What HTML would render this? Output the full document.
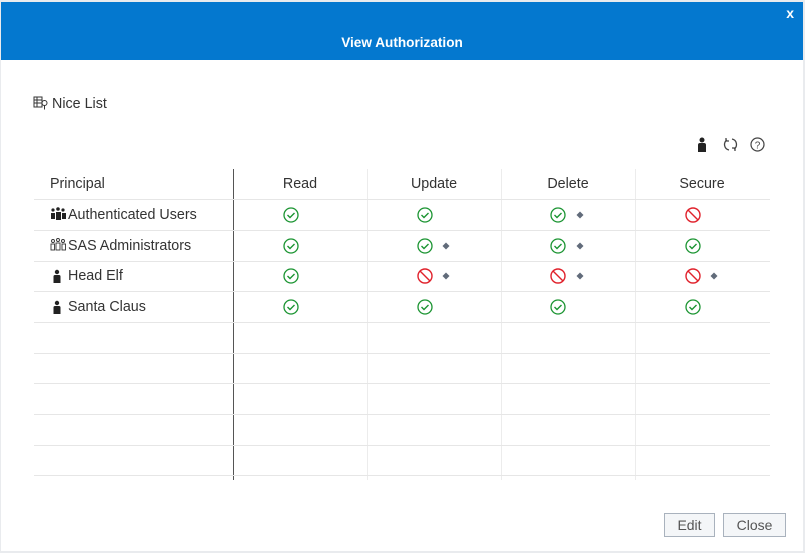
<!DOCTYPE html>
<html><head><style>
body{margin:0;width:805px;height:553px;background:#e9ebee;font-family:"Liberation Sans",sans-serif;position:relative;overflow:hidden}
.dlg{position:absolute;left:1px;top:2px;width:802px;height:549px;background:#fff}
.hdr{position:absolute;left:0;top:0;width:802px;height:58px;background:#0478cf;color:#fff}
.hdr .t{position:absolute;top:33px;width:100%;text-align:center;font-weight:bold;font-size:13.6px}
.hdr .x{position:absolute;right:9px;top:3px;font-weight:bold;font-size:14px}
.abs{position:absolute}
.txt{font-size:14.3px;color:#333}
.hl{position:absolute;left:34px;width:736px;height:1px;background:#e6e6e6}
.vl{position:absolute;top:169px;height:311px;width:1px;background:#ececec}
.th{position:absolute;top:176px;font-size:14.3px;color:#333;text-align:center;width:134px}
.btn{position:absolute;top:513px;height:22px;border:1px solid #a9b2bd;background:#f4f6f8;color:#555;font-size:14px;text-align:center;line-height:22px}
</style></head><body>
<div class="dlg">
<div class="hdr"><div class="t">View Authorization</div><div class="x">x</div></div>
</div>
<svg class="abs" style="left:33px;top:96px" width="16" height="14" viewBox="0 0 16 14"><rect x="1" y="1" width="8" height="10" fill="none" stroke="#333"/><path d="M1 4h8M1 7h8M4 1v10" stroke="#333"/><circle cx="11.5" cy="7" r="2.5" fill="#fff" stroke="#333"/><path d="M11.5 9.5v4" stroke="#333"/></svg>
<div class="abs txt" style="left:52px;top:96px">Nice List</div>
<svg class="abs" style="left:697px;top:137px" width="10" height="16" viewBox="0 0 10 16"><circle cx="5" cy="3" r="2.5" fill="#222"/><path d="M1 15V8q0-2 2-2h4q2 0 2 2v7z" fill="#222"/></svg>
<svg class="abs" style="left:723px;top:137px" width="15" height="15" viewBox="0 0 15 15" fill="none" stroke="#444" stroke-width="1.3"><path d="M4 3A5.5 5.5 0 0 0 6 13M11 12A5.5 5.5 0 0 0 9 2"/><path d="M3 1v3h3M12 14v-3h-3"/></svg>
<svg class="abs" style="left:750px;top:137px" width="15" height="15" viewBox="0 0 15 15"><circle cx="7.5" cy="7.5" r="6.5" fill="none" stroke="#444" stroke-width="1.2"/><text x="7.5" y="11.5" font-size="10" text-anchor="middle" fill="#444" font-family="Liberation Sans">?</text></svg>
<div class="abs" style="left:50px;top:176px;font-size:14.3px;color:#333">Principal</div>
<div class="th" style="left:233px">Read</div>
<div class="th" style="left:367px">Update</div>
<div class="th" style="left:501px">Delete</div>
<div class="th" style="left:635px">Secure</div>
<div class="abs" style="left:233px;top:169px;width:1px;height:311px;background:#555"></div>
<div class="vl" style="left:367px"></div><div class="vl" style="left:501px"></div><div class="vl" style="left:635px"></div>
<div class="hl" style="top:199px"></div><div class="hl" style="top:230px"></div><div class="hl" style="top:261px"></div><div class="hl" style="top:291px"></div><div class="hl" style="top:322px"></div><div class="hl" style="top:353px"></div><div class="hl" style="top:383px"></div><div class="hl" style="top:414px"></div><div class="hl" style="top:445px"></div><div class="hl" style="top:475px"></div>
<svg width="805" height="553" class="abs" style="left:0;top:0">
<defs>
<g id="ok"><circle r="7" fill="none" stroke="#1a9431" stroke-width="1.3"/><path d="M-3.5 0l2.5 2.5 4.5-4.5" fill="none" stroke="#1a9431" stroke-width="1.4"/></g>
<g id="no"><circle r="7" fill="none" stroke="#e0212b" stroke-width="1.4"/><path d="M-5 -5L5 5" stroke="#e0212b" stroke-width="1.4"/></g>
<path id="d" d="M0 -3.5L3.5 0 0 3.5 -3.5 0z" fill="#616b7a"/>
<g id="p"><circle cx="0" cy="-5" r="2.2" fill="#222"/><path d="M-3.5 6V-0.5q0-1.5 1.5-1.5h4q1.5 0 1.5 1.5V6z" fill="#222"/></g>
</defs>
<use href="#ok" x="291" y="215"/><use href="#ok" x="425" y="215"/><use href="#ok" x="558" y="215"/><use href="#d" x="580" y="215"/><use href="#no" x="693" y="215"/>
<use href="#ok" x="291" y="246"/><use href="#ok" x="425" y="246"/><use href="#d" x="446" y="246"/><use href="#ok" x="558" y="246"/><use href="#d" x="580" y="246"/><use href="#ok" x="693" y="246"/>
<use href="#ok" x="291" y="276"/><use href="#no" x="425" y="276"/><use href="#d" x="446" y="276"/><use href="#no" x="558" y="276"/><use href="#d" x="580" y="276"/><use href="#no" x="693" y="276"/><use href="#d" x="714" y="276"/>
<use href="#ok" x="291" y="307"/><use href="#ok" x="425" y="307"/><use href="#ok" x="558" y="307"/><use href="#ok" x="693" y="307"/>
<use href="#p" x="57" y="277"/><use href="#p" x="57" y="308"/>
<g fill="#222"><circle cx="53" cy="210" r="1.6"/><circle cx="58" cy="209" r="1.8"/><circle cx="63" cy="210" r="1.6"/><rect x="51" y="213" width="4" height="6"/><rect x="56" y="212" width="5" height="8"/><rect x="62" y="213" width="4" height="6"/></g>
<g fill="none" stroke="#333" stroke-width="0.9"><circle cx="53" cy="241" r="1.5"/><circle cx="58" cy="240" r="1.5"/><circle cx="63" cy="241" r="1.5"/><rect x="51" y="244" width="3.5" height="6"/><rect x="56" y="243" width="4" height="7"/><rect x="62" y="244" width="3.5" height="6"/></g>
</svg>
<div class="abs txt" style="left:68px;top:207px">Authenticated Users</div>
<div class="abs txt" style="left:68px;top:238px">SAS Administrators</div>
<div class="abs txt" style="left:68px;top:268px">Head Elf</div>
<div class="abs txt" style="left:68px;top:299px">Santa Claus</div>
<div class="btn" style="left:664px;width:49px">Edit</div>
<div class="btn" style="left:723px;width:61px">Close</div>
</body></html>
